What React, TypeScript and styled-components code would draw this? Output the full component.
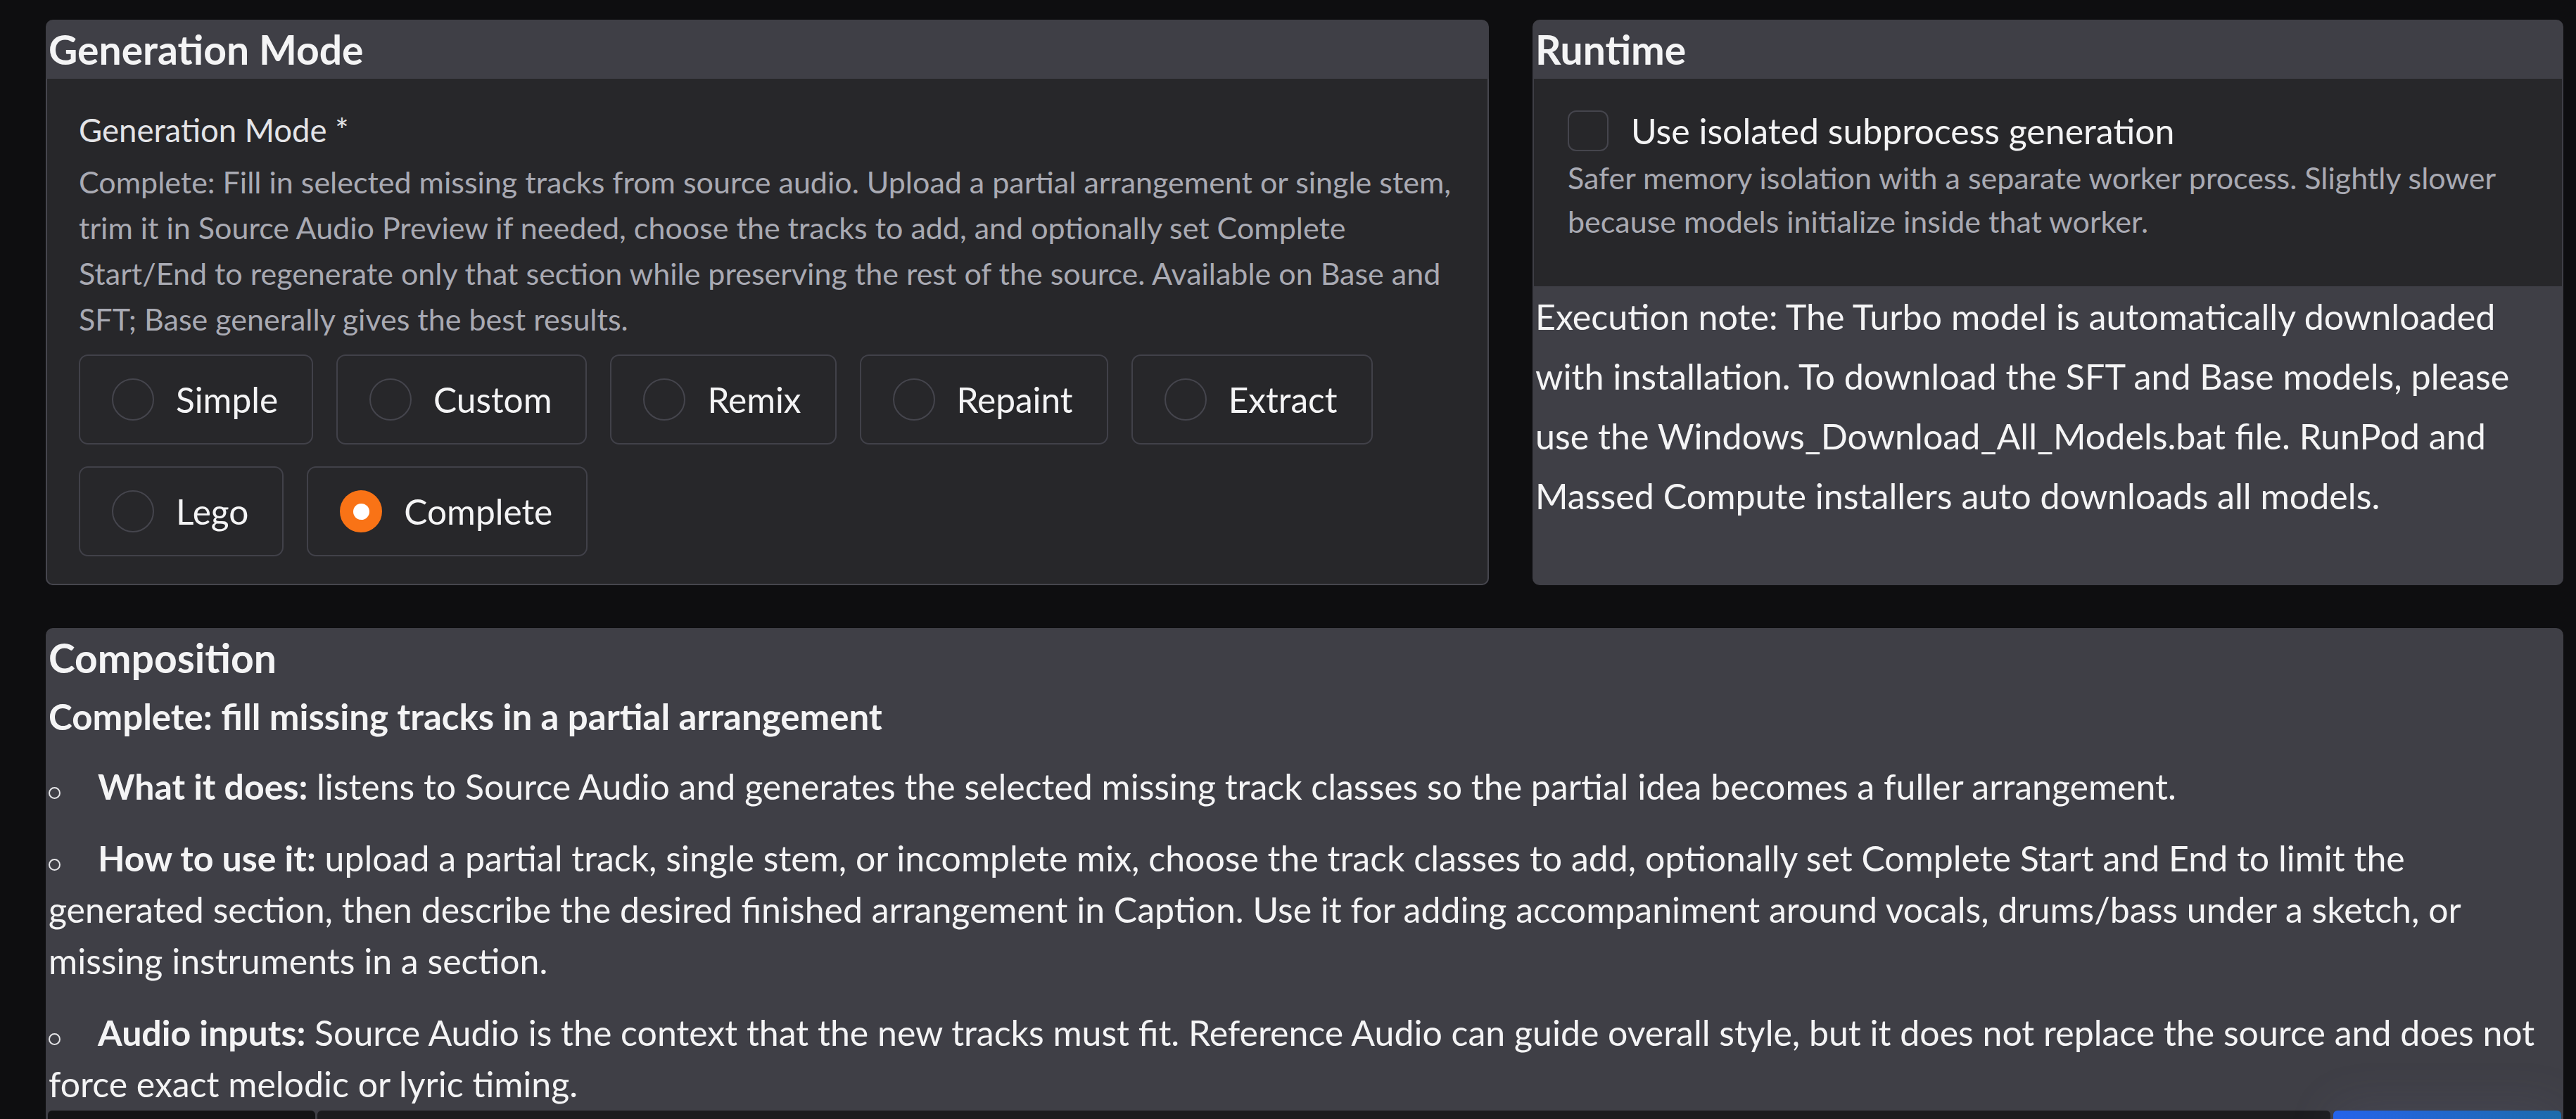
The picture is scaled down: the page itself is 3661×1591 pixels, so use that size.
import React from "react";
import styled, { createGlobalStyle } from "styled-components";

const GlobalStyle = createGlobalStyle`
  *, *::before, *::after { box-sizing: border-box; }
  html, body {
    margin: 0;
    padding: 0;
    background: #0e0e10;
  }
  body {
    font-family: Lato, "Noto Sans", "DejaVu Sans", sans-serif;
    color: #f4f4f5;
    overflow: hidden;
  }
`;

const Page = styled.main`
  height: 1591px;
  overflow: hidden;
  padding: 28px 18px 0 65px;
  display: flex;
  flex-direction: column;
  gap: 61px;
`;

const TopRow = styled.div`
  display: flex;
  gap: 62px;
  align-items: stretch;
`;

const Group = styled.section<{ $grow?: number }>`
  flex: ${(p) => p.$grow ?? 1} 1 0;
  min-width: 0;
  background: #3f3f46;
  border-radius: 10px;
  overflow: hidden;
  display: flex;
  flex-direction: column;
`;

const GroupTitle = styled.h2`
  margin: 0;
  height: 84px;
  flex: none;
  display: flex;
  align-items: center;
  padding-left: 4px;
  font-size: 57px;
  font-weight: 700;
  line-height: 1;
  color: #f4f4f5;
`;

/* Generation mode block */
const Block = styled.div`
  flex: 1;
  background: #27272a;
  border: 2px solid #46464e;
  border-top: 0;
  border-radius: 0 0 10px 10px;
  padding: 39px 35px 39px 45px;
`;

const FieldLabel = styled.div`
  font-size: 45.5px;
  line-height: 68px;
  color: #e4e4e7;
`;

const Info = styled.p<{ $lh?: number }>`
  margin: 0;
  font-size: 43px;
  line-height: ${(p) => p.$lh ?? 65}px;
  color: #a9aab3;
`;

const ModeInfo = styled(Info)`
  margin-top: 7px;
`;

const RadioGrid = styled.div`
  display: flex;
  flex-wrap: wrap;
  gap: 31px 33px;
  margin-top: 18px;
`;

const RadioOption = styled.label`
  display: flex;
  align-items: center;
  gap: 31px;
  height: 128px;
  padding: 0 48px 0 45px;
  border: 2px solid #414149;
  border-radius: 13px;
  font-size: 49.6px;
  color: #f4f4f5;
  cursor: pointer;
`;

const RadioDot = styled.span<{ $checked?: boolean }>`
  position: relative;
  flex: none;
  width: 60px;
  height: 60px;
  border-radius: 50%;
  border: 2px solid ${(p) => (p.$checked ? "#f97316" : "#45454d")};
  background: ${(p) => (p.$checked ? "#f97316" : "transparent")};

  &::after {
    content: "";
    display: ${(p) => (p.$checked ? "block" : "none")};
    position: absolute;
    left: 50%;
    top: 50%;
    width: 23px;
    height: 23px;
    margin: -11.5px 0 0 -11.5px;
    border-radius: 50%;
    background: #ffffff;
  }
`;

/* Runtime group */
const CheckBlock = styled.div`
  flex: none;
  background: #27272a;
  margin: 0 2px;
  padding: 45px 48px 61px 48px;
`;

const CheckRow = styled.label`
  display: flex;
  align-items: center;
  gap: 32px;
  height: 58px;
  font-size: 50px;
  color: #f4f4f5;
`;

const CheckBox = styled.span`
  flex: none;
  width: 58px;
  height: 58px;
  border: 2px solid #45454d;
  border-radius: 12px;
  background: #27272a;
`;

const CheckInfo = styled(Info)`
  margin-top: 7px;
`;

const Note = styled.p`
  margin: 0;
  padding: 0 20px 0 4px;
  font-size: 50.2px;
  line-height: 85px;
  color: #f4f4f5;
`;

/* Composition group */
const Composition = styled(Group)`
  flex: none;
`;

const Subtitle = styled.div`
  margin-top: 7px;
  padding-left: 4px;
  font-size: 51px;
  font-weight: 700;
  line-height: 69px;
  color: #f4f4f5;
`;

const Steps = styled.ul`
  list-style: none;
  margin: 29px 0 0;
  padding: 0 30px 0 4px;
  display: flex;
  flex-direction: column;
  gap: 29px;
`;

const Step = styled.li`
  font-size: 50px;
  line-height: 73px;
  color: #f4f4f5;

  strong {
    font-weight: 700;
  }
`;

const Bullet = styled.span`
  display: inline-block;
  width: 17px;
  height: 17px;
  margin-right: 53px;
  border: 2px solid #e4e4e7;
  border-radius: 50%;
  vertical-align: 1px;
`;

const ActionRow = styled.div`
  display: flex;
  gap: 3px;
  height: 80px;
  margin-top: 1px;
  padding: 0 3px;
`;

const InputStub = styled.div<{ $w?: number; $tone: string }>`
  flex: ${(p) => (p.$w ? `0 0 ${p.$w}px` : "1 1 0")};
  background: ${(p) => p.$tone};
  border-radius: 6px 6px 0 0;
`;

const RunButton = styled.button`
  flex: 0 0 324px;
  margin-left: 1px;
  border: 0;
  border-radius: 6px 6px 0 0;
  background: linear-gradient(90deg, #2563eb, #1c6bab);
  box-shadow: 0 -6px 70px rgba(120, 120, 170, 0.12);
`;

const modes = ["Simple", "Custom", "Remix", "Repaint", "Extract", "Lego", "Complete"];

export default function App() {
  return (
    <>
      <GlobalStyle />
      <Page>
        <TopRow>
          <Group $grow={7}>
            <GroupTitle>Generation Mode</GroupTitle>
            <Block>
              <FieldLabel>Generation Mode *</FieldLabel>
              <ModeInfo>
                Complete: Fill in selected missing tracks from source audio. Upload a partial
                arrangement or single stem, trim it in Source Audio Preview if needed, choose the
                tracks to add, and optionally set Complete Start/End to regenerate only that section
                while preserving the rest of the source. Available on Base and SFT; Base generally
                gives the best results.
              </ModeInfo>
              <RadioGrid>
                {modes.map((m) => (
                  <RadioOption key={m}>
                    <RadioDot $checked={m === "Complete"} />
                    {m}
                  </RadioOption>
                ))}
              </RadioGrid>
            </Block>
          </Group>

          <Group $grow={5}>
            <GroupTitle>Runtime</GroupTitle>
            <CheckBlock>
              <CheckRow>
                <CheckBox />
                Use isolated subprocess generation
              </CheckRow>
              <CheckInfo $lh={62}>
                Safer memory isolation with a separate worker process. Slightly slower because
                models initialize inside that worker.
              </CheckInfo>
            </CheckBlock>
            <Note>
              Execution note: The Turbo model is automatically downloaded with installation. To
              download the SFT and Base models, please use the Windows_Download_All_Models.bat
              file. RunPod and Massed Compute installers auto downloads all models.
            </Note>
          </Group>
        </TopRow>

        <Composition>
          <GroupTitle>Composition</GroupTitle>
          <Subtitle>Complete: fill missing tracks in a partial arrangement</Subtitle>
          <Steps>
            <Step>
              <Bullet />
              <strong>What it does:</strong> listens to Source Audio and generates the selected
              missing track classes so the partial idea becomes a fuller arrangement.
            </Step>
            <Step>
              <Bullet />
              <strong>How to use it:</strong> upload a partial track, single stem, or incomplete
              mix, choose the track classes to add, optionally set Complete Start and End to limit
              the generated section, then describe the desired finished arrangement in Caption. Use
              it for adding accompaniment around vocals, drums/bass under a sketch, or missing
              instruments in a section.
            </Step>
            <Step>
              <Bullet />
              <strong>Audio inputs:</strong> Source Audio is the context that the new tracks must
              fit. Reference Audio can guide overall style, but it does not replace the source and
              does not force exact melodic or lyric timing.
            </Step>
          </Steps>
          <ActionRow>
            <InputStub $w={380} $tone="#131315" />
            <InputStub $tone="#1c1c1f" />
            <RunButton aria-label="Generate" />
          </ActionRow>
        </Composition>
      </Page>
    </>
  );
}
